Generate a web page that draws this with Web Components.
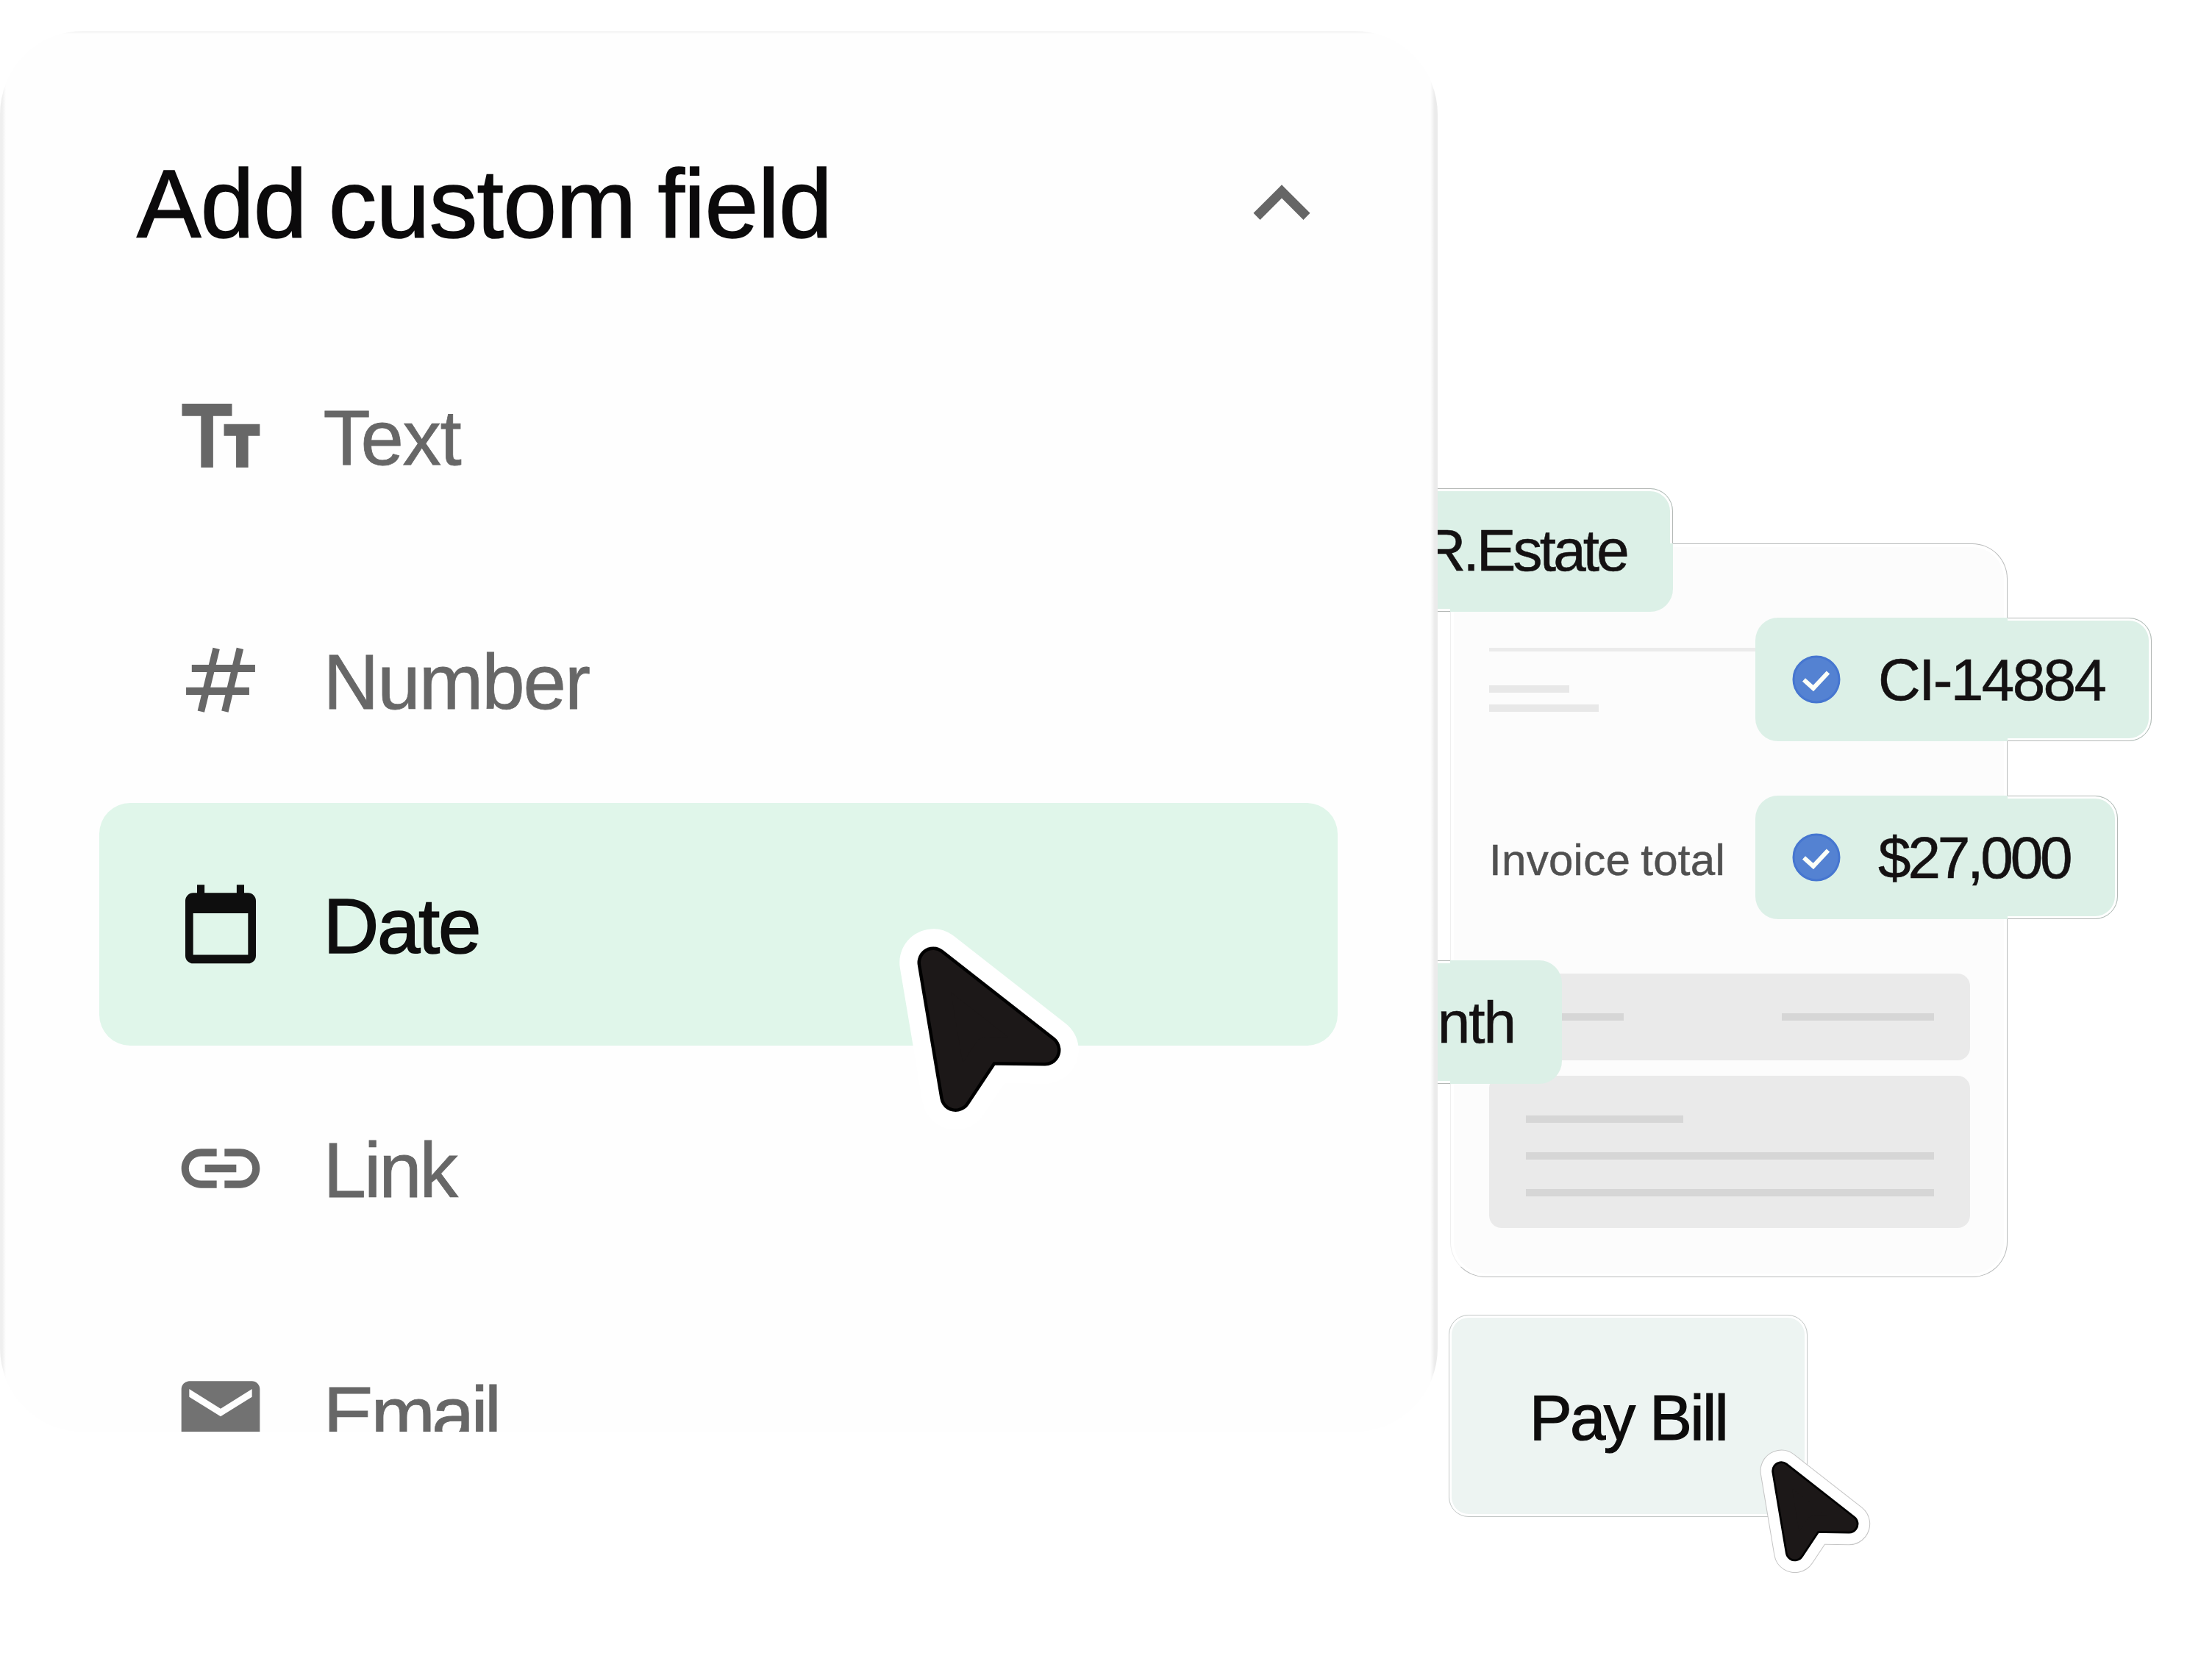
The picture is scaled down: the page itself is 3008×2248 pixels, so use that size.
<!DOCTYPE html>
<html lang="en">
<head>
  <meta charset="utf-8">
  <title>Add custom field</title>
  <style>
    body {
      margin: 0;
      background-color: #fff;
      font-family: "Liberation Sans", Arial, sans-serif;
    }
  </style>
</head>
<body>
  <bill-scene></bill-scene>

  <script>
    const icons = {
      text: '<path d="M2.15 3.75v3.15H7v13.1h3.1V6.9h4.8V3.75zM12.85 8.95v3h3.1V20h3.1v-8.05H22v-3z"/>',
      number: `<g fill="none" stroke="currentColor">
                 <path stroke-width="1.9" d="M4.65 9H20.8M3.2 14.8h16.1"/>
                 <path stroke-width="1.8" d="M10.9 3.9 7 20M16.95 3.9 13.1 20"/>
               </g>`,
      date: '<path d="M19 4h-1V1.9h-1.9V4H7.9V1.9H6V4H5a2 2 0 0 0-2 2v14a2 2 0 0 0 2 2h14a2 2 0 0 0 2-2V6a2 2 0 0 0-2-2zm0 15.8H5V9.2h14z"/>',
      link: '<path d="M3.9 12c0-1.71 1.39-3.1 3.1-3.1h4V7H7c-2.76 0-5 2.24-5 5s2.24 5 5 5h4v-1.9H7c-1.71 0-3.1-1.39-3.1-3.1zM8 13h8v-2H8v2zm9-6h-4v1.9h4c1.71 0 3.1 1.39 3.1 3.1s-1.39 3.1-3.1 3.1h-4V17h4c2.76 0 5-2.24 5-5s-2.24-5-5-5z"/>',
      email: '<path fill="#727272" d="M20 4H4a2 2 0 0 0-2 2v12a2 2 0 0 0 2 2h16a2 2 0 0 0 2-2V6a2 2 0 0 0-2-2zm0 4-8 5-8-5V6l8 5 8-5z"/>',
    };

    class PointerCursor extends HTMLElement {
      constructor() {
        super();
        this.attachShadow({mode: 'open'}).innerHTML = `
          <style>
            :host {
              display: block;
              position: absolute;
              z-index: 3;
              width: 264px;
            }
            :host([small]) {
              width: 160px;
            }
            svg {
              display: block;
              width: 100%;
              overflow: visible;
              stroke-linejoin: round;
            }
            .outline {
              display: none;
            }
            :host([small]) .outline {
              display: block;
            }
          </style>
          <svg viewBox="0 0 264 292">
            <defs><path id="arrow" d="M50 50 202 169 122.7 168 80.5 231.5z"/></defs>
            <use class="outline" href="#arrow" fill="#c6c6c6" stroke="#c6c6c6" stroke-width="95"/>
            <use href="#arrow" fill="#fff" stroke="#fff" stroke-width="91.5"/>
            <use href="#arrow" fill="#000" stroke="#000" stroke-width="43"/>
            <use href="#arrow" fill="#1c1818" stroke="#1c1818" stroke-width="34"/>
          </svg>
        `;
      }
    }
    customElements.define('pointer-cursor', PointerCursor);

    class FieldOption extends HTMLElement {
      connectedCallback() {
        this.attachShadow({mode: 'open'}).innerHTML = `
          <style>
            :host {
              display: flex;
              align-items: center;
              gap: 76px;
              height: 330px;
              box-sizing: border-box;
              padding-left: 100.5px;
              border-radius: 42px;
              color: #676767;
              font-size: 105px;
              line-height: 120px;
              white-space: nowrap;
              -webkit-text-stroke: 0.8px;
            }
            :host([active]) {
              background-color: #e0f6ea;
              color: #0e0e0e;
              -webkit-text-stroke: 1.6px;
            }
            svg {
              flex: none;
              width: 128px;
              height: 128px;
              fill: currentColor;
            }
            span {
              padding-top: 6px;
            }
          </style>
          <svg viewBox="0 0 24 24" aria-hidden="true">${icons[this.getAttribute('icon')]}</svg>
          <span><slot></slot></span>
        `;
      }
    }
    customElements.define('field-option', FieldOption);

    class FieldPanel extends HTMLElement {
      constructor() {
        super();
        this.attachShadow({mode: 'open'}).innerHTML = `
          <style>
            :host {
              display: block;
              position: relative;
              z-index: 2;
              box-sizing: border-box;
              width: 1955px;
              height: 1905px;
              overflow: hidden;
              border-radius: 114px;
              background:
                linear-gradient(to right, #efefef 3px, transparent 8px),
                linear-gradient(to left, #ebebeb 4px, transparent 10px),
                linear-gradient(to bottom, #f6f6f6 2px, transparent 4px),
                #fefefe;
            }
            header {
              display: flex;
              justify-content: space-between;
              box-sizing: border-box;
              height: 386px;
              padding: 158px 135.5px 0 186px;
            }
            h1 {
              margin: 1px 0 0;
              font-size: 131px;
              font-weight: 400;
              line-height: 154px;
              letter-spacing: -0.7px;
              word-spacing: -6px;
              color: #0b0a0b;
              -webkit-text-stroke: 1.6px;
            }
            svg {
              width: 154px;
              height: 154px;
              fill: #666;
            }
            .options {
              display: flex;
              flex-direction: column;
              gap: 2px;
              margin: 0 136px 0 135px;
            }
          </style>
          <header>
            <h1><slot name="title"></slot></h1>
            <svg viewBox="0 0 24 24" aria-hidden="true"><path d="m12 8-6 6 1.41 1.41L12 10.83l4.59 4.58L18 14z"/></svg>
          </header>
          <div class="options"><slot></slot></div>
        `;
      }
    }
    customElements.define('field-panel', FieldPanel);

    class ValueChip extends HTMLElement {
      connectedCallback() {
        const check = `
          <svg viewBox="-33 -33 66 66" aria-hidden="true">
            <circle r="31" fill="#5482d2" stroke="#4676d0" stroke-width="3"/>
            <path d="M-17 .5-4.2 12 16-9.5" fill="none" stroke="#fcfff8" stroke-width="6"/>
          </svg>`;
        this.attachShadow({mode: 'open'}).innerHTML = `
          <style>
            :host {
              display: flex;
              position: absolute;
              align-items: center;
              justify-content: flex-end;
              gap: 51px;
              box-sizing: border-box;
              height: 168px;
              border-radius: 31px;
              background-color: #dcf0e7;
              color: #141112;
              font-size: 80px;
              white-space: nowrap;
              -webkit-text-stroke: 0.6px;
            }
            :host([checked]) {
              justify-content: flex-start;
              padding-left: 50px;
            }
            /* edge line, shown only where the chip leaves the document */
            :host::after {
              content: "";
              position: absolute;
              inset: 0;
              border: 1px solid #b4b8b6;
              border-radius: 31px;
              box-shadow: inset 0 0 0 3px #fff;
              clip-path: var(--outside);
            }
            svg {
              flex: none;
              width: 66px;
              height: 66px;
            }
            span {
              padding-top: 1px;
            }
          </style>
          ${this.hasAttribute('checked') ? check : ''}
          <span><slot></slot></span>
        `;
      }
    }
    customElements.define('value-chip', ValueChip);

    class InvoiceDocument extends HTMLElement {
      constructor() {
        super();
        this.attachShadow({mode: 'open'}).innerHTML = `
          <style>
            :host {
              display: block;
              position: relative;
              box-sizing: border-box;
              width: 758px;
              height: 998px;
              padding: 141px 50px 0 52px;
              border: 1px solid #b9bbbb;
              border-left-color: #efefef;
              border-radius: 48px;
              background-color: #fcfcfc;
              box-shadow: inset 0 0 0 4px #fff;
            }
            .rule {
              height: 5px;
              background-color: #ebebeb;
            }
            .line {
              height: 10px;
              background-color: #e8e8e8;
            }
            .meta {
              display: flex;
              flex-direction: column;
              gap: 16px;
              margin-top: 46px;
            }
            p {
              margin: 172px 0 -1px;
              color: #505050;
              font-size: 60px;
              line-height: 60px;
              letter-spacing: 0.3px;
              word-spacing: -3px;
              -webkit-text-stroke: 0.5px;
            }
            .block {
              display: flex;
              box-sizing: border-box;
              padding: 54px 49px 0 50px;
              border-radius: 17px;
              background-color: #eaeaea;
            }
            .block .line {
              background-color: #d6d6d6;
            }
            .head {
              justify-content: space-between;
              height: 118px;
              margin-top: 125px;
            }
            .body {
              flex-direction: column;
              gap: 40px;
              height: 207px;
              margin-top: 21px;
            }
            value-chip:nth-of-type(1) {
              top: -76px;
              left: -101px;
              width: 403px;
              padding-right: 63px;
              letter-spacing: -3.8px;
              --outside: polygon(0 0, 100% 0, 100% 75px, 100px 75px, 100px 100%, 0 100%);
            }
            value-chip:nth-of-type(2) {
              top: 100px;
              left: 414px;
              width: 539px;
              letter-spacing: -2.6px;
              --outside: inset(0 0 0 343px);
            }
            value-chip:nth-of-type(3) {
              top: 342px;
              left: 414px;
              width: 493px;
              letter-spacing: -4.1px;
              --outside: inset(0 0 0 343px);
            }
            value-chip:nth-of-type(4) {
              top: 566px;
              left: -101px;
              width: 252px;
              padding-right: 64px;
              letter-spacing: -2px;
              --outside: inset(0 152px 0 0);
            }
          </style>
          <div class="rule"></div>
          <div class="meta">
            <div class="line" style="width: 109px"></div>
            <div class="line" style="width: 149px"></div>
          </div>
          <p>Invoice total</p>
          <div class="block head">
            <div class="line" style="width: 133px"></div>
            <div class="line" style="width: 207px"></div>
          </div>
          <div class="block body">
            <div class="line" style="width: 214px"></div>
            <div class="line"></div>
            <div class="line"></div>
          </div>
          <value-chip>R.Estate</value-chip>
          <value-chip checked>CI-14884</value-chip>
          <value-chip checked>$27,000</value-chip>
          <value-chip>nth</value-chip>
        `;
      }
    }
    customElements.define('invoice-document', InvoiceDocument);

    class PayButton extends HTMLElement {
      constructor() {
        super();
        this.attachShadow({mode: 'open'}).innerHTML = `
          <style>
            :host {
              display: block;
              width: 488px;
              height: 275px;
            }
            button {
              width: 100%;
              height: 100%;
              padding: 4px 0 0;
              border: 1px solid #c4c8c7;
              border-radius: 27px;
              background-color: #edf4f2;
              box-shadow: inset 0 0 0 3px #fff;
              color: #0d0c0c;
              font: inherit;
              font-size: 87px;
              letter-spacing: -2.7px;
              -webkit-text-stroke: 1.2px;
            }
          </style>
          <button><slot></slot></button>
        `;
      }
    }
    customElements.define('pay-button', PayButton);

    class BillScene extends HTMLElement {
      constructor() {
        super();
        this.attachShadow({mode: 'open'}).innerHTML = `
          <style>
            :host {
              display: flex;
              position: relative;
              align-items: flex-start;
              gap: 15px;
              box-sizing: border-box;
              width: 3008px;
              height: 2248px;
              padding-top: 42px;
              overflow: hidden;
            }
            .bill {
              display: flex;
              flex-direction: column;
              gap: 51px;
              padding-top: 697px;
            }
            invoice-document {
              margin-left: 2px;
            }
          </style>
          <field-panel>
            <span slot="title">Add custom field</span>
            <field-option icon="text" style="letter-spacing: -1.5px">Text</field-option>
            <field-option icon="number" style="letter-spacing: -2px">Number</field-option>
            <field-option icon="date" active style="letter-spacing: -2.3px">Date</field-option>
            <field-option icon="link" style="letter-spacing: -3px">Link</field-option>
            <field-option icon="email" style="letter-spacing: -5px">Email</field-option>
          </field-panel>
          <div class="bill">
            <invoice-document></invoice-document>
            <pay-button>Pay Bill</pay-button>
          </div>
          <pointer-cursor style="left: 1219px; top: 1259px"></pointer-cursor>
          <pointer-cursor small style="left: 2392px; top: 1970px"></pointer-cursor>
        `;
      }
    }
    customElements.define('bill-scene', BillScene);
  </script>
</body>
</html>
